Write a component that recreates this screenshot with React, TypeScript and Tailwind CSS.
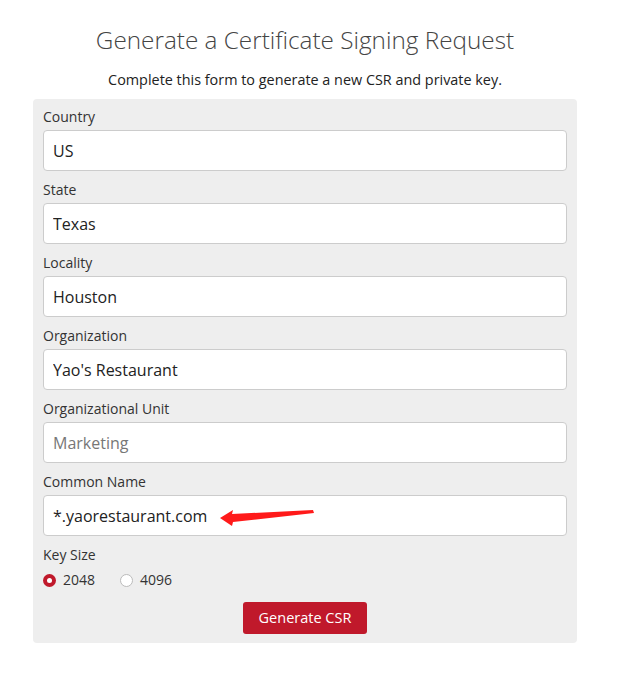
import React from "react";

const font = { fontFamily: '"Open Sans", "Noto Sans", sans-serif' };

const fields = [
  { label: "Country", value: "US" },
  { label: "State", value: "Texas" },
  { label: "Locality", value: "Houston" },
  { label: "Organization", value: "Yao's Restaurant" },
  { label: "Organizational Unit", placeholder: "Marketing" },
  { label: "Common Name", value: "*.yaorestaurant.com", arrow: true },
];

function Arrow() {
  return (
    <svg
      className="pointer-events-none absolute left-[177px] top-[15px]"
      width="100"
      height="20"
      viewBox="0 0 100 20"
    >
      <polygon
        points="0,8 13,0 12,4 93,0 94,3 13,12 12,16"
        fill="#ff1a1a"
      />
    </svg>
  );
}

export default function App() {
  return (
    <div className="min-h-[681px] w-full bg-white text-[#333]" style={font}>
      <div className="ml-[33px] w-[544px] pt-[22px]">
        <h1 className="text-center text-[24.3px] font-light leading-[36px] text-[#444]">
          Generate a Certificate Signing Request
        </h1>
        <p className="mt-[12px] text-center text-[14.4px] leading-[20px] text-[#222]">
          Complete this form to generate a new CSR and private key.
        </p>
        <form className="mt-[9px] rounded-[4px] bg-[#eeeeee] px-[10px] pb-[9px] pt-[8px]">
          <div className="flex flex-col gap-[9px]">
            {fields.map((f) => (
              <div key={f.label}>
                <label className="mb-[3px] block text-[14px] leading-[20px] text-[#333]">
                  {f.label}
                </label>
                <div className="relative">
                  <input
                    readOnly
                    value={f.value ?? ""}
                    placeholder={f.placeholder}
                    className="block h-[41px] w-full rounded-[4px] border border-[#cccccc] bg-white px-[9px] text-[16px] text-[#222] placeholder:text-[#777]"
                  />
                  {f.arrow && <Arrow />}
                </div>
              </div>
            ))}
            <div>
              <div className="text-[14px] leading-[20px] text-[#333]">Key Size</div>
              <div className="mt-[5px] flex items-center text-[14px] leading-[20px]">
                <span className="flex items-center">
                  <span className="flex h-[13px] w-[13px] items-center justify-center rounded-full bg-[#c0192b]">
                    <span className="h-[5px] w-[5px] rounded-full bg-white" />
                  </span>
                  <span className="ml-[7px]">2048</span>
                </span>
                <span className="ml-[25px] flex items-center">
                  <span className="h-[13px] w-[13px] rounded-full border border-[#bbbbbb] bg-white" />
                  <span className="ml-[7px]">4096</span>
                </span>
              </div>
            </div>
          </div>
          <div className="mt-[12px] flex justify-center">
            <button
              type="button"
              className="h-[32px] w-[124px] rounded-[3px] bg-[#c0192b] text-[14.5px] text-white"
            >
              Generate CSR
            </button>
          </div>
        </form>
      </div>
    </div>
  );
}
